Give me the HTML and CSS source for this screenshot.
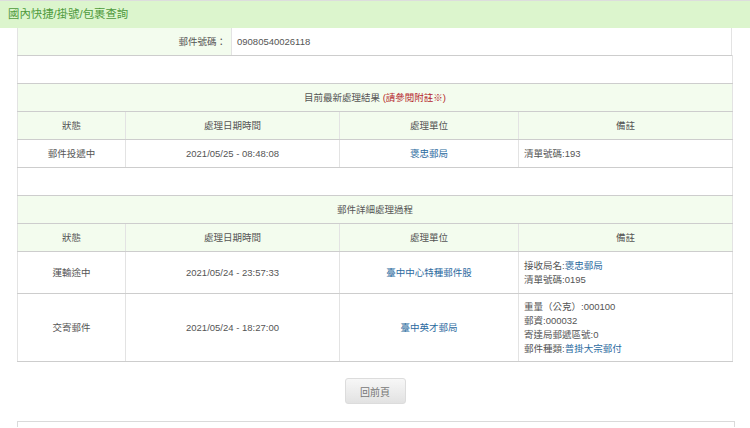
FILE: index.html
```html
<!DOCTYPE html>
<html lang="zh-Hant">
<head>
    <meta charset="UTF-8">
    <meta name="viewport" content="width=device-width, initial-scale=1.0">
    <title>國內快捷/掛號/包裹查詢</title>
    <link rel="stylesheet" href="styles.css">
</head>
<body>
    <div class="page-title">國內快捷/掛號/包裹查詢</div>

    <table class="track-table query-table">
        <colgroup>
            <col class="col-label">
            <col>
        </colgroup>
        <tr>
            <td class="label">郵件號碼：</td>
            <td class="value">09080540026118</td>
        </tr>
    </table>

    <table class="track-table">
        <colgroup>
            <col class="col-status">
            <col class="col-time">
            <col class="col-unit">
            <col class="col-note">
        </colgroup>
        <tr class="spacer"><td colspan="4"></td></tr>

        <tr>
            <td class="section" colspan="4">目前最新處理結果 <span class="note-red">(請參閱附註※)</span></td>
        </tr>
        <tr class="head">
            <td>狀態</td>
            <td>處理日期時間</td>
            <td>處理單位</td>
            <td>備註</td>
        </tr>
        <tr>
            <td class="c">郵件投遞中</td>
            <td class="c">2021/05/25 - 08:48:08</td>
            <td class="c"><a href="#">褒忠郵局</a></td>
            <td>清單號碼:193</td>
        </tr>
        <tr class="spacer"><td colspan="4"></td></tr>

        <tr>
            <td class="section" colspan="4">郵件詳細處理過程</td>
        </tr>
        <tr class="head">
            <td>狀態</td>
            <td>處理日期時間</td>
            <td>處理單位</td>
            <td>備註</td>
        </tr>
        <tr>
            <td class="c">運輸途中</td>
            <td class="c">2021/05/24 - 23:57:33</td>
            <td class="c"><a href="#">臺中中心特種郵件股</a></td>
            <td>接收局名:<a href="#">褒忠郵局</a><br>清單號碼:0195</td>
        </tr>
        <tr>
            <td class="c">交寄郵件</td>
            <td class="c">2021/05/24 - 18:27:00</td>
            <td class="c"><a href="#">臺中英才郵局</a></td>
            <td class="multi">重量（公克）:000100<br>郵資:000032<br>寄達局郵遞區號:0<br>郵件種類:<a href="#">普掛大宗郵付</a></td>
        </tr>
    </table>

    <div class="actions">
        <button class="back-btn" onclick="history.back()">回前頁</button>
    </div>

    <div class="footer-box"></div>
</body>
</html>
```

FILE: styles.css
```css
* {
    margin: 0;
    padding: 0;
    box-sizing: border-box;
}

body {
    font-family: "Liberation Sans", "Noto Sans CJK TC", sans-serif;
    font-size: 9.5px;
    color: #555;
    background: #fff;
    border-top: 1px solid #ddd;
}

a {
    color: #2b6aa0;
    text-decoration: none;
}

.page-title {
    height: 27px;
    line-height: 27px;
    padding-left: 8px;
    background: #dcf5cd;
    color: #4f9a3c;
    font-size: 11.4px;
}

.track-table {
    width: 715px;
    margin-left: 17px;
    border-collapse: collapse;
    table-layout: fixed;
    border-left: 1px solid #d6d6d6;
    border-right: 1px solid #e2e2e2;
}

.col-label { width: 214px; }
.col-status { width: 108px; }
.col-time { width: 214px; }
.col-unit { width: 179px; }
.col-note { width: 214px; }

.track-table td {
    padding: 6.5px 5px;
    line-height: 14px;
    border-top: 1px solid #cdcdcd;
    border-bottom: 1px solid #cdcdcd;
    border-left: 1px solid #e3e3e3;
    border-right: 1px solid #e3e3e3;
    vertical-align: middle;
}

.track-table td.multi {
    padding-top: 6px;
    padding-bottom: 5px;
}

.query-table td {
    border-top: none;
    border-bottom: none;
}

.track-table .label {
    background: #f3fcee;
    text-align: right;
    padding-right: 5px;
}

.track-table .value {
    padding-left: 5px;
}

.track-table .spacer td {
    height: 28px;
}

.track-table .section {
    background: #f3fcee;
    text-align: center;
}

.note-red {
    color: #b5272d;
}

.track-table .head td {
    background: #f3fcee;
    text-align: center;
}

.track-table .c {
    text-align: center;
}

.actions {
    display: flex;
    justify-content: center;
    padding: 16px 0 17px;
}

.back-btn {
    width: 61px;
    height: 26px;
    border: 1px solid #dcdcdc;
    border-radius: 3px;
    background: linear-gradient(#f7f7f7, #e2e2e2);
    color: #777;
    font-family: inherit;
    font-size: 10px;
    cursor: pointer;
}

.footer-box {
    margin: 0 15px 0 17px;
    height: 6px;
    border: 1px solid #dadada;
    border-bottom: none;
}
```
